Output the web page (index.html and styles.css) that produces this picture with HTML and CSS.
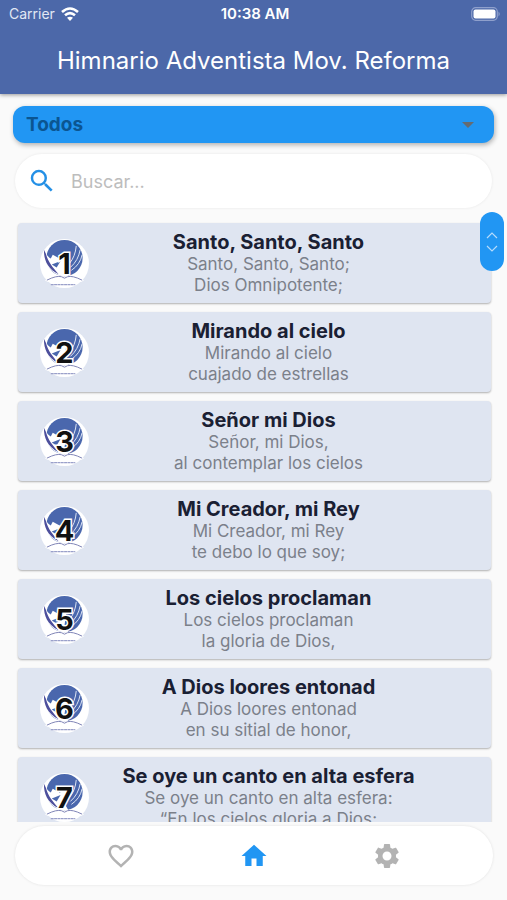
FILE: index.html
```html
<!DOCTYPE html>
<html lang="es">
<head>
  <meta charset="utf-8">
  <meta name="viewport" content="width=device-width, initial-scale=1">
  <title>Himnario Adventista Mov. Reforma</title>
  <link rel="stylesheet" href="styles.css">
</head>
<body>

<!-- shared logo for the hymn cards -->
<svg class="defs" aria-hidden="true">
  <symbol id="logo" viewBox="0 0 50 50">
    <circle cx="25" cy="25" r="25" fill="#fff"/>
    <circle cx="25" cy="19.500" r="18.500" fill="#4a67ad"/>
    <path d="M3 13 L6 11 C6 16 8 18 11 20 L13 16 L20 20 L27 17 L25 31 L29 38 C20 39 12 34 8 28 C4 23 3 18 3 13z" fill="#fff"/>
    <path d="M4 11 C4 21 7 30 19 36 C13 29 8 23 6 15z" fill="#4d4f9c"/>
    <path d="M12 26 L21 22.500 L17 29z" fill="#4a67ad"/>
    <path d="M30 25 Q36 18 37 7 M31 29 Q39 22 41 11 M32 32 Q41 26 43 16" fill="none" stroke="#dfe6f5" stroke-width="1"/>
    <path d="M5 42 Q16 35 25 39 Q34 35 45 42 L42 44 Q33 40 25 42 Q17 40 8 44z" fill="#fff"/>
    <path d="M7 42 Q17 37 22 38.500 L25 40 L28 38.500 Q33 37 43 42" fill="none" stroke="#7d82b4" stroke-width="1"/>
    <path d="M11 46.500H36" fill="none" stroke="#9aa0ca" stroke-width="1.200" stroke-dasharray="3 .4"/>
  </symbol>
</svg>

<header class="header">
  <div class="status">
    <div class="carrier">
      Carrier
      <svg width="18" height="14" viewBox="0 0 18 14" fill="none" stroke="#fff" stroke-width="2.600">
        <path d="M1 5 Q9 -2 17 5"/>
        <path d="M4 8.300 Q9 4 14 8.300"/>
        <path d="M9 14 L6 10.800 Q9 8.500 12 10.800z" fill="#fff" stroke="none"/>
      </svg>
    </div>
    <div class="time">10:38 AM</div>
    <div class="battery">
      <svg width="30" height="14" viewBox="0 0 30 14">
        <rect x=".7" y=".7" width="25.600" height="12.600" rx="4" fill="none" stroke="#8fa0cc" stroke-width="1.200"/>
        <rect x="2.500" y="2.500" width="22" height="9" rx="2" fill="#fff"/>
        <path d="M27.500 4.500 Q30 7 27.500 9.500z" fill="#8fa0cc"/>
      </svg>
    </div>
  </div>
  <h1>Himnario Adventista Mov. Reforma</h1>
</header>

<div class="filters">
  <div class="category">
    <select aria-label="Categoría">
      <option>Todos</option>
    </select>
    <svg width="12" height="6" viewBox="0 0 12 6"><path d="M0 0H12L6 6z" fill="#666b70"/></svg>
  </div>
  <label class="search">
    <svg width="30" height="30" viewBox="0 0 24 24" fill="#2490e6"><path d="M15.500 14h-.79l-.28-.27A6.470 6.470 0 0 0 16 9.500 6.500 6.500 0 1 0 9.500 16c1.610 0 3.090-.59 4.230-1.570l.27.280v.79l5 4.990L20.490 19l-4.990-5zm-6 0C7.010 14 5 11.990 5 9.500S7.010 5 9.500 5 14 7.010 14 9.500 11.990 14 9.500 14z"/></svg>
    <input type="text" placeholder="Buscar..." aria-label="Buscar">
  </label>
</div>

<main class="hymns">
  <div class="scroller">
    <svg width="12" height="24" viewBox="0 0 12 24" fill="none" stroke="#b5dbfb" stroke-width="1.200"><path d="M1 8l5-5 5 5M1 16l5 5 5-5"/></svg>
  </div>
  <ul class="list">
    <li class="card">
      <div class="avatar"><svg><use href="#logo"/></svg><span>1</span></div>
      <div class="text"><h2>Santo, Santo, Santo</h2><p>Santo, Santo, Santo;<br>Dios Omnipotente;</p></div>
    </li>
    <li class="card">
      <div class="avatar"><svg><use href="#logo"/></svg><span>2</span></div>
      <div class="text"><h2>Mirando al cielo</h2><p>Mirando al cielo<br>cuajado de estrellas</p></div>
    </li>
    <li class="card">
      <div class="avatar"><svg><use href="#logo"/></svg><span>3</span></div>
      <div class="text"><h2>Señor mi Dios</h2><p>Señor, mi Dios,<br>al contemplar los cielos</p></div>
    </li>
    <li class="card">
      <div class="avatar"><svg><use href="#logo"/></svg><span>4</span></div>
      <div class="text"><h2>Mi Creador, mi Rey</h2><p>Mi Creador, mi Rey<br>te debo lo que soy;</p></div>
    </li>
    <li class="card">
      <div class="avatar"><svg><use href="#logo"/></svg><span>5</span></div>
      <div class="text"><h2>Los cielos proclaman</h2><p>Los cielos proclaman<br>la gloria de Dios,</p></div>
    </li>
    <li class="card">
      <div class="avatar"><svg><use href="#logo"/></svg><span>6</span></div>
      <div class="text"><h2>A Dios loores entonad</h2><p>A Dios loores entonad<br>en su sitial de honor,</p></div>
    </li>
    <li class="card">
      <div class="avatar"><svg><use href="#logo"/></svg><span>7</span></div>
      <div class="text"><h2>Se oye un canto en alta esfera</h2><p>Se oye un canto en alta esfera:<br>“En los cielos gloria a Dios;</p></div>
    </li>
  </ul>
</main>

<nav class="tabs">
  <button type="button" aria-label="Favoritos">
    <svg width="30" height="30" viewBox="0 0 24 24"><path d="M16.500 3c-1.740 0-3.410.81-4.500 2.090C10.910 3.810 9.240 3 7.500 3 4.420 3 2 5.420 2 8.500c0 3.780 3.400 6.860 8.550 11.540L12 21.350l1.450-1.320C18.600 15.360 22 12.280 22 8.500 22 5.420 19.580 3 16.500 3zm-4.400 15.550l-.1.100-.1-.1C7.140 14.240 4 11.390 4 8.500 4 6.500 5.500 5 7.500 5c1.540 0 3.040.99 3.570 2.360h1.870C13.460 5.990 14.960 5 16.500 5c2 0 3.500 1.500 3.500 3.500 0 2.890-3.140 5.740-7.900 10.050z"/></svg>
  </button>
  <button type="button" class="active" aria-label="Inicio">
    <svg width="30" height="30" viewBox="0 0 24 24"><path d="M10 20v-6h4v6h5v-8h3L12 3 2 12h3v8z"/></svg>
  </button>
  <button type="button" aria-label="Ajustes">
    <svg width="30" height="30" viewBox="0 0 24 24"><path d="M19.140 12.940c.04-.3.060-.61.060-.94 0-.32-.02-.64-.07-.94l2.030-1.580c.18-.14.230-.41.120-.61l-1.920-3.320c-.12-.22-.37-.29-.59-.22l-2.390.96c-.5-.38-1.030-.7-1.620-.94l-.36-2.540c-.04-.24-.24-.41-.48-.41h-3.840c-.24 0-.43.170-.47.410l-.36 2.540c-.59.240-1.130.57-1.620.94l-2.390-.96c-.22-.08-.47 0-.59.220L2.740 8.870c-.12.210-.08.470.12.610l2.030 1.580c-.05.300-.09.630-.09.940s.02.640.07.940l-2.030 1.580c-.18.140-.23.410-.12.610l1.920 3.320c.12.220.37.290.59.220l2.390-.96c.5.380 1.030.7 1.620.94l.36 2.540c.05.240.24.410.48.410h3.840c.24 0 .44-.17.470-.41l.36-2.540c.59-.24 1.130-.56 1.620-.94l2.390.96c.22.080.47 0 .59-.22l1.920-3.320c.12-.22.070-.47-.12-.61l-2.010-1.580zM12 15.600c-1.980 0-3.600-1.620-3.600-3.600s1.620-3.600 3.600-3.600 3.600 1.620 3.600 3.600-1.620 3.600-3.600 3.600z"/></svg>
  </button>
</nav>

</body>
</html>
```
FILE: styles.css
```css
* { box-sizing: border-box; }

body {
  margin: 0;
  height: 100vh;
  display: flex;
  flex-direction: column;
  overflow: hidden;
  background: #fafafa;
  font-family: Inter, "Liberation Sans", sans-serif;
}
svg { display: block; }
.defs { position: absolute; width: 0; height: 0; }

/* header */
.header {
  background: #4c68a9;
  color: #fff;
  box-shadow: 0 1px 4px rgba(0,0,0,.4);
}
.status {
  display: grid;
  grid-template-columns: 1fr auto 1fr;
  align-items: center;
  height: 27px;
  padding: 0 6px 0 9px;
  font-size: 14px;
}
.carrier {
  display: flex;
  align-items: center;
  gap: 6px;
  color: #e1e7f4;
}
.time { font-weight: 600; font-size: 15px; }
.battery { justify-self: end; }
.header h1 {
  margin: 0;
  height: 67px;
  line-height: 67px;
  text-align: center;
  font-size: 24px;
  font-weight: 400;
}

/* category + search */
.filters { padding: 12px 13px 14px; }
.category {
  display: grid;
  align-items: center;
}
.category select, .category svg { grid-area: 1 / 1; }
.category select {
  appearance: none;
  width: 100%;
  height: 37px;
  padding: 0 13px;
  border: 0;
  border-radius: 12px;
  background: #2196f3;
  box-shadow: 1px 2px 5px rgba(0,0,0,.3);
  color: #0b5591;
  font: 700 19px Inter, "Liberation Sans", sans-serif;
}
.category svg {
  justify-self: end;
  margin-right: 20px;
  pointer-events: none;
}
.search {
  display: flex;
  align-items: center;
  gap: 14px;
  height: 54px;
  margin: 11px 2px 0;
  padding: 0 12px;
  border-radius: 27px;
  background: #fff;
  box-shadow: 0 0 3px rgba(0,0,0,.08);
}
.search input {
  flex: 1;
  min-width: 0;
  padding: 0;
  border: 0;
  outline: 0;
  background: none;
  font: 18px Inter, "Liberation Sans", sans-serif;
}
.search input::placeholder { color: #bdbdbd; }

/* hymn list */
.hymns {
  flex: 1;
  min-height: 0;
  position: relative;
}
.list {
  height: 100%;
  margin: 0;
  padding: 1px 16px 0 18px;
  overflow: hidden;
  list-style: none;
}
.card {
  display: flex;
  align-items: center;
  gap: 17px;
  height: 80px;
  margin-bottom: 9px;
  padding: 0 60px 0 22px;
  border-radius: 4px;
  background: #dfe5f1;
  box-shadow: 0 1px 2px rgba(0,0,0,.3);
}
.avatar {
  display: grid;
  place-items: center;
  width: 49px;
  height: 49px;
}
.avatar svg, .avatar span { grid-area: 1 / 1; }
.avatar svg { width: 49px; height: 49px; }
.avatar span {
  z-index: 1;
  color: #111;
  font-size: 29px;
  font-weight: 700;
  line-height: 49px;
  -webkit-text-stroke: 3px #fff;
  paint-order: stroke fill;
}
.text { flex: 1; text-align: center; white-space: nowrap; }
.text h2 {
  margin: 0;
  color: #1a2033;
  font-size: 20px;
  font-weight: 700;
  line-height: 24px;
}
.text p {
  margin: 0;
  color: #7b808a;
  font-size: 17px;
  line-height: 21px;
}
.scroller {
  position: absolute;
  z-index: 2;
  top: -10px;
  right: 3px;
  display: grid;
  place-items: center;
  width: 24px;
  height: 59px;
  border-radius: 12px;
  background: #2196f3;
}

/* bottom tabs */
.tabs {
  display: flex;
  justify-content: center;
  gap: 103px;
  align-items: center;
  height: 59px;
  margin: 4px 14px 15px 15px;
  border-radius: 30px;
  background: #fff;
  box-shadow: 0 0 3px rgba(0,0,0,.1);
}
.tabs button {
  padding: 0;
  border: 0;
  background: none;
  fill: #b3b3b3;
}
.tabs .active { fill: #2196f3; }
```
